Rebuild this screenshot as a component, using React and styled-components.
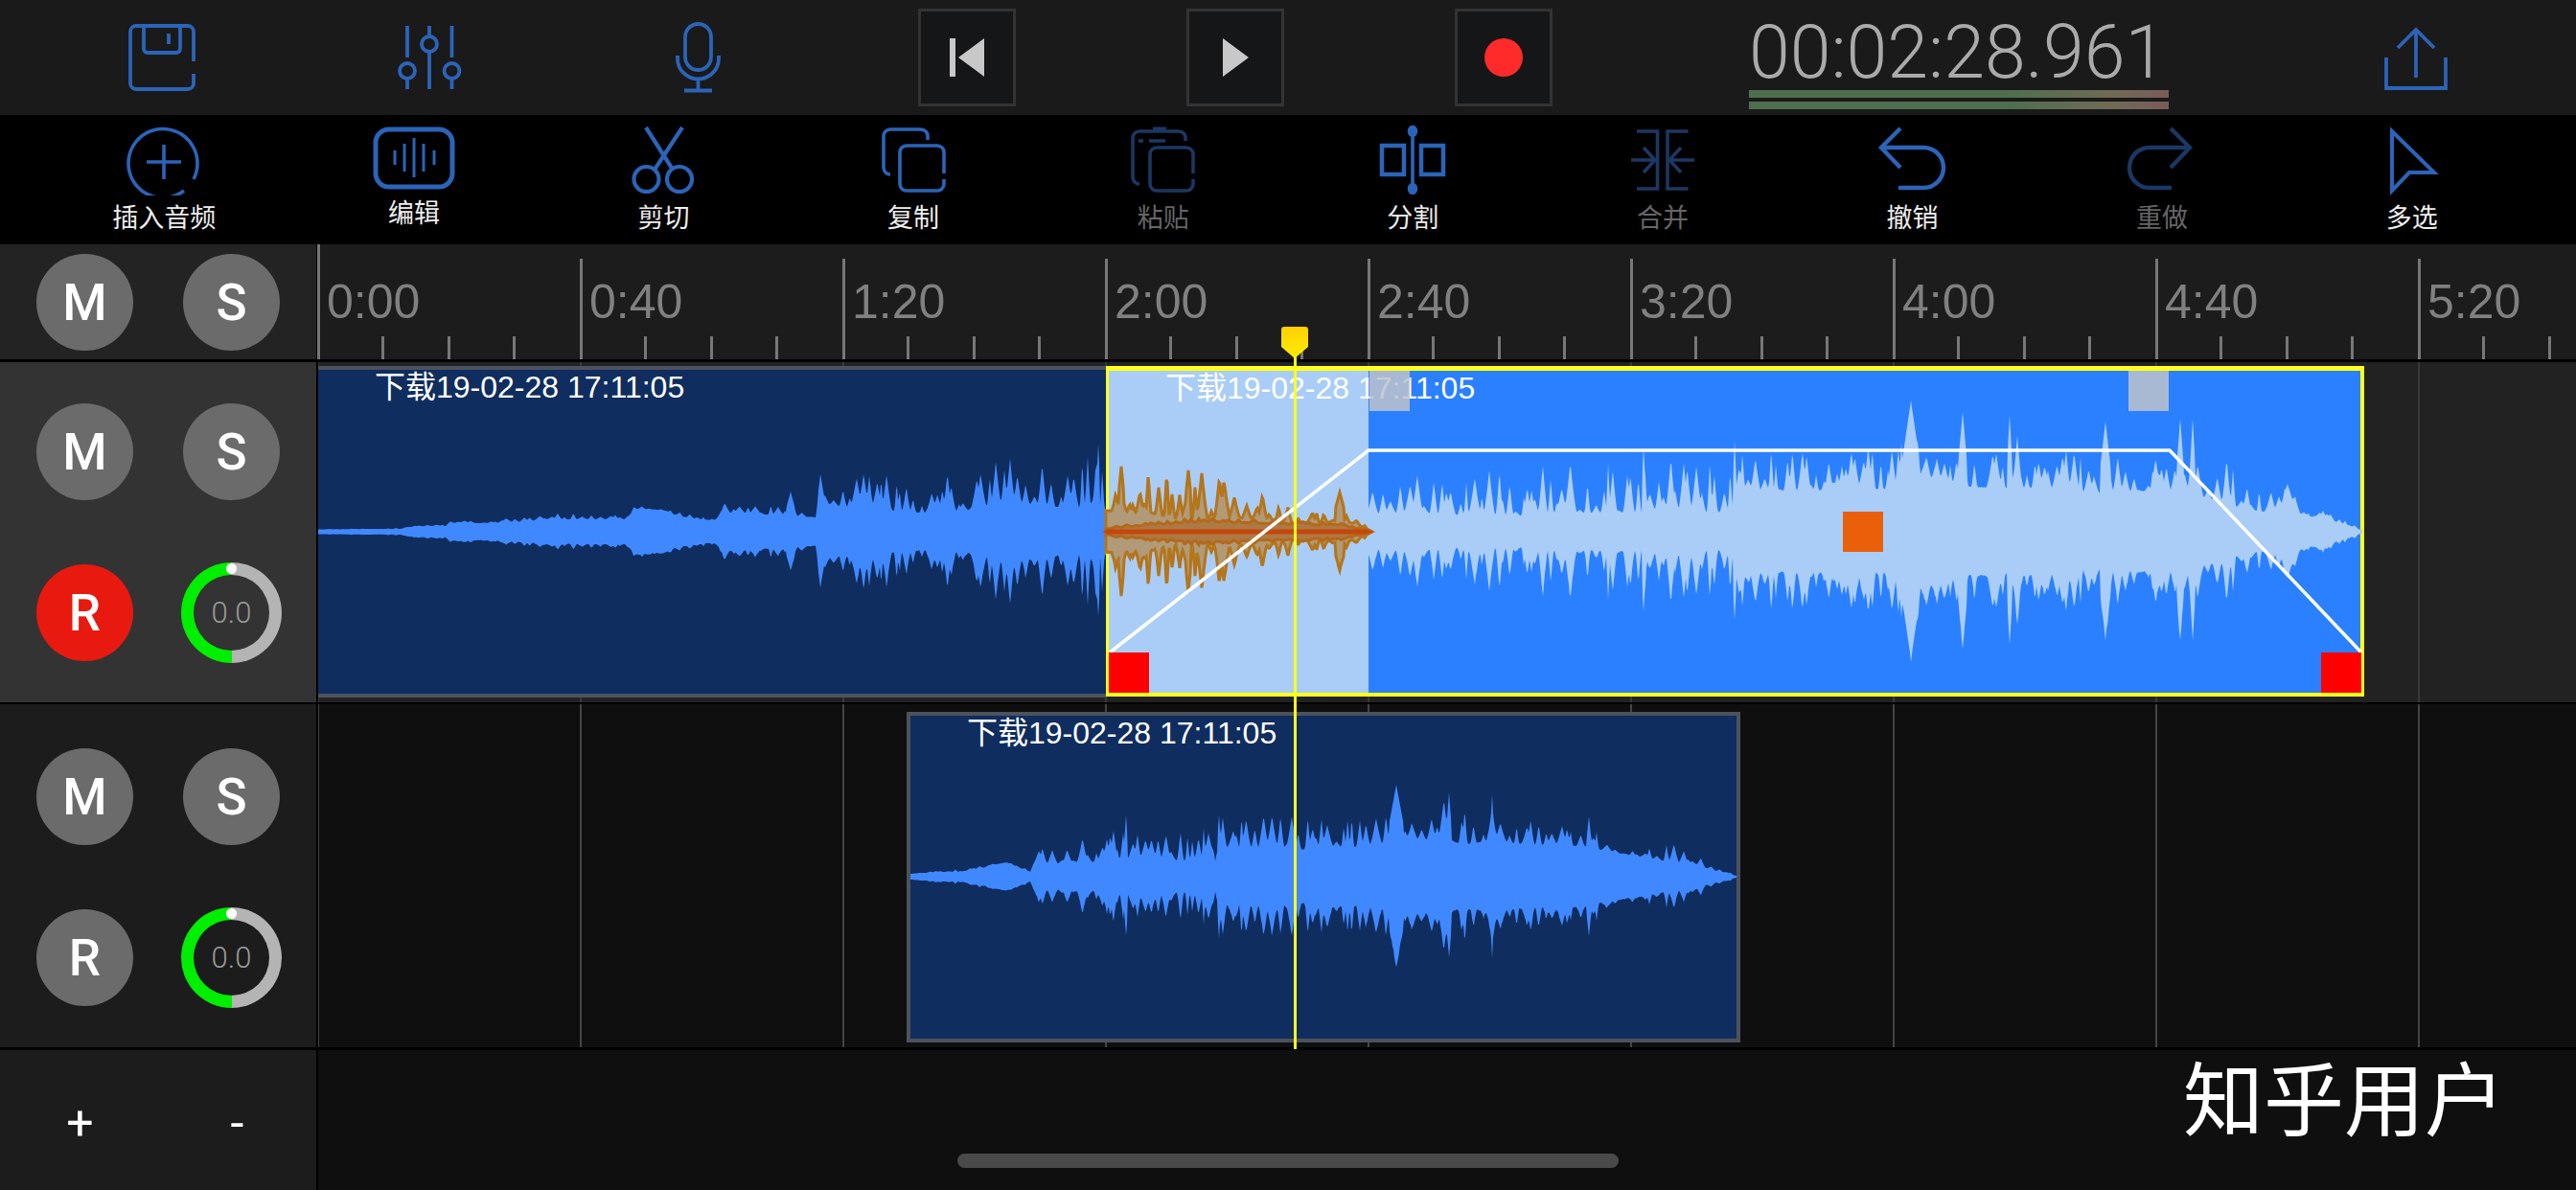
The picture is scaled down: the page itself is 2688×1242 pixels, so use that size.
import React from 'react'
import styled, { createGlobalStyle } from 'styled-components'

const BLUE = '#2b64b8'
const DIM = '#1c3763'
const SANS = '"Liberation Sans", "Noto Sans CJK SC", sans-serif'

// seeded noise so the wave forms stay the same between runs
const makeRng = (seed) => () => {
  seed = (seed * 16807) % 2147483647
  return seed / 2147483647
}

const lerpStops = (stops, x) => {
  for (let i = 1; i < stops.length; i++) {
    if (x <= stops[i][0]) {
      const [x0, b0, t0] = stops[i - 1]
      const [x1, b1, t1] = stops[i]
      const k = (x - x0) / (x1 - x0 || 1)
      return [b0 + (b1 - b0) * k, t0 + (t1 - t0) * k]
    }
  }
  const last = stops[stops.length - 1]
  return [last[1], last[2]]
}

const makeSpikes = (from, to, rng) => {
  const out = []
  for (let x = from; x < to; x += 3 + rng() * 8) {
    out.push({ x, h: Math.pow(rng(), 0.75), w: 2.5 + rng() * 4.5 })
  }
  return out
}

const spikeAt = (spikes, x) => {
  let best = 0
  for (const s of spikes) {
    const d = Math.abs(x - s.x)
    if (d < s.w) best = Math.max(best, s.h * Math.pow(1 - d / s.w, 1.3))
  }
  return best
}

const wavePath = (stops, peaks, cy, seed) => {
  const from = stops[0][0]
  const to = stops[stops.length - 1][0]
  const rng = makeRng(seed)
  const spikes = makeSpikes(from, to, rng)
  const upper = []
  const lower = []
  for (let x = from; x <= to; x += 1) {
    const [body, top] = lerpStops(stops, x)
    let amp = body + (top - body) * spikeAt(spikes, x)
    for (const [px, pa, hw] of peaks) {
      const d = Math.abs(x - px)
      if (d < hw) amp = Math.max(amp, pa * (1 - (d / hw) * 0.45))
    }
    upper.push(`${x.toFixed(1)} ${(cy - amp).toFixed(1)}`)
    lower.unshift(`${x.toFixed(1)} ${(cy + amp * (0.95 + rng() * 0.05)).toFixed(1)}`)
  }
  return `M${upper.join('L')}L${lower.join('L')}Z`
}

const LEAD_IN = [
  [332, 2.5, 3], [418, 3, 4], [425, 5, 6], [465, 6, 8], [470, 9, 11], [520, 9, 13],
  [574, 13, 20], [655, 13, 19], [661, 24, 27], [695, 22, 27], [712, 14, 20], [745, 12, 14],
  [757, 20, 33], [800, 18, 30], [848, 15, 24], [851, 15, 18], [854, 28, 64], [900, 25, 62],
  [960, 20, 58], [1010, 22, 66], [1050, 32, 78], [1100, 26, 84], [1154, 24, 82],
]
const LEAD_IN_PEAKS = [[825, 42, 5], [856, 60, 3], [1146, 92, 2]]

const SELECTED = [
  [1428, 18, 60], [1500, 18, 60], [1600, 16, 74], [1640, 20, 74], [1715, 20, 78],
  [1760, 22, 78], [1805, 20, 82], [1815, 42, 90], [1980, 45, 90], [1985, 58, 95],
  [2005, 60, 100], [2020, 50, 82], [2070, 46, 86], [2125, 46, 86], [2150, 44, 94],
  [2180, 40, 76], [2215, 42, 80], [2260, 42, 78], [2305, 34, 74], [2322, 28, 82],
  [2350, 22, 60], [2380, 20, 42], [2387, 35, 50], [2400, 18, 30], [2440, 10, 18], [2465, 1, 2],
]
const SELECTED_PEAKS = [
  [1994, 137, 9], [2048, 125, 5], [2097, 122, 3], [2105, 100, 4], [2197, 115, 6],
  [2275, 118, 4], [2288, 118, 3], [1715, 88, 2], [1810, 95, 2], [2387, 50, 7],
]

const FADE_OUTER = [
  [1154, 22, 68], [1200, 20, 64], [1238, 12, 66], [1300, 14, 54], [1345, 9, 32],
  [1380, 8, 18], [1396, 12, 24], [1415, 8, 15], [1432, 0, 1],
]
const FADE_OUTER_PEAKS = [[1240, 64, 3], [1398, 41, 5], [1170, 68, 3]]
const FADE_INNER = [[1154, 3, 5], [1240, 10, 14], [1300, 9, 13], [1345, 8, 12], [1400, 6, 9], [1432, 0, 1]]

const SECOND = [
  [950, 3, 3], [980, 5, 7], [1000, 5, 9], [1020, 8, 12], [1050, 15, 17], [1075, 5, 7],
  [1078, 12, 31], [1115, 14, 30], [1126, 16, 42], [1152, 15, 50], [1200, 20, 48], [1240, 16, 48],
  [1265, 20, 56], [1268, 14, 20], [1272, 30, 68], [1350, 28, 66], [1430, 32, 64], [1445, 34, 66],
  [1470, 38, 60], [1505, 38, 84], [1530, 34, 74], [1557, 38, 80], [1590, 34, 74], [1650, 32, 54],
  [1680, 26, 50], [1740, 16, 40], [1770, 12, 26], [1790, 6, 12], [1812, 1, 2],
]
const SECOND_PEAKS = [[1457, 96, 8], [1512, 88, 3], [1557, 86, 2], [1175, 64, 2], [1272, 65, 2], [1658, 63, 3]]

const PATHS = {
  leadIn: wavePath(LEAD_IN, LEAD_IN_PEAKS, 555, 11),
  selected: wavePath(SELECTED, SELECTED_PEAKS, 555, 73),
  fadeOuter: wavePath(FADE_OUTER, FADE_OUTER_PEAKS, 555, 29),
  fadeInner: wavePath(FADE_INNER, [], 555, 41),
  second: wavePath(SECOND, SECOND_PEAKS, 915, 97),
}

const GlobalStyle = createGlobalStyle`
  html, body {
    margin: 0;
    background: #000;
    overflow: hidden;
  }
`

const Screen = styled.div`
  position: relative;
  width: 2688px;
  height: 1242px;
  overflow: hidden;
  display: flex;
  flex-direction: column;
  background: #000;
  font-family: ${SANS};
`

const TopBar = styled.div`
  height: 120px;
  flex: none;
  display: grid;
  grid-template-columns: repeat(6, 280px) 1fr 280px;
  padding: 0 27px 0 29px;
  align-items: center;
  justify-items: center;
  background: #1a1a1a;
`

const Transport = styled.div`
  box-sizing: border-box;
  width: 102px;
  height: 102px;
  display: flex;
  align-items: center;
  justify-content: center;
  background: #151617;
  border: 3px solid #333;
`

const TimerCell = styled.div`
  justify-self: start;
  padding-left: 116px;
  display: flex;
  flex-direction: column;
  gap: 1px;
  padding-top: 15px;
`

const Clock = styled.div`
  font-family: Roboto, sans-serif;
  font-weight: 300;
  font-size: 77px;
  line-height: 76px;
  color: #aaa;
  white-space: nowrap;
`

const Meter = styled.div`
  width: 438px;
  height: 8px;
  margin-bottom: 4px;
  background: linear-gradient(90deg, #4f6e4f 0, #4f6e4f 62%, #6f6b55 85%, #7a5c5a 100%);
`

const Toolbar = styled.div`
  height: 135px;
  flex: none;
  box-sizing: border-box;
  display: grid;
  grid-template-columns: repeat(10, 1fr);
  padding: 9px 41px 0;
  background: #000;
`

const Tool = styled.div`
  display: flex;
  flex-direction: column;
  align-items: center;
`

const ToolIcon = styled.svg`
  display: block;
  height: 75px;
  fill: none;
  stroke: ${({ $off }) => ($off ? DIM : BLUE)};
  stroke-width: 3.6;
`

const ToolLabel = styled.div`
  font-size: 27px;
  line-height: 32px;
  margin-top: ${({ $raised }) => ($raised ? '3px' : '8px')};
  color: ${({ $off }) => ($off ? '#666' : '#eee')};
  white-space: nowrap;
`

const TopIcon = styled.svg`
  display: block;
  fill: none;
  stroke: ${BLUE};
  stroke-width: 3.8;
`

const Row = styled.div`
  flex: none;
  height: ${({ $h }) => $h}px;
  margin-bottom: ${({ $gap }) => $gap || 0}px;
  display: grid;
  grid-template-columns: 330px 1fr;
  column-gap: 2px;
`

const Panel = styled.div`
  box-sizing: border-box;
  display: grid;
  grid-template-columns: 101px 101px;
  grid-auto-rows: 101px;
  column-gap: 52px;
  row-gap: 67px;
  padding: ${({ $top }) => $top}px 0 0 38px;
  background: ${({ $bg }) => $bg};
`

const Round = styled.div`
  width: 101px;
  height: 101px;
  border-radius: 50%;
  display: flex;
  align-items: center;
  justify-content: center;
  background: ${({ $on }) => ($on ? '#e8190f' : '#6b6b6b')};
  color: #fff;
  font-family: Roboto, sans-serif;
  font-weight: 500;
  font-size: 53px;
`

const Knob = styled.div`
  position: relative;
  width: 105px;
  height: 105px;
  margin: -2px;
  border-radius: 50%;
  display: flex;
  align-items: center;
  justify-content: center;
  background: conic-gradient(#b4b4b4 0 50%, #00ee00 50% 100%);
`

const KnobHub = styled.div`
  width: 79px;
  height: 79px;
  border-radius: 50%;
  display: flex;
  align-items: center;
  justify-content: center;
  background: ${({ $bg }) => $bg};
  color: #999;
  font-family: Roboto, sans-serif;
  font-weight: 300;
  font-size: 31px;
`

const KnobDot = styled.div`
  position: absolute;
  top: 1px;
  left: 47px;
  width: 11px;
  height: 11px;
  border-radius: 50%;
  background: #fff;
`

const Ruler = styled.div`
  margin-left: -1px;
  display: flex;
  overflow: hidden;
  background: #1c1c1c;
`

const tick = (x, y, h) => `linear-gradient(#777, #777) ${x}px ${y}px / 3px ${h}px no-repeat`

const RulerCell = styled.div`
  flex: 0 0 274px;
  box-sizing: border-box;
  padding: 32px 0 0 10px;
  font-size: 50px;
  line-height: 56px;
  color: #808080;
  background: ${({ $first }) => ($first ? tick(0, 0, 120) : tick(0, 15, 105))},
    ${tick(67, 96, 24)}, ${tick(136, 96, 24)}, ${tick(204, 96, 24)};
`

const Lane = styled.div`
  position: relative;
  background: linear-gradient(to right, ${({ $line }) => $line} 2px, transparent 2px) -1px 0 / 274px 100%, ${({ $bg }) => $bg};
`

const Clip = styled.div`
  position: absolute;
  box-sizing: border-box;
  left: ${({ $x }) => $x}px;
  top: ${({ $y }) => $y}px;
  width: ${({ $w }) => $w}px;
  height: ${({ $h }) => $h}px;
  border-style: solid;
  border-color: ${({ $selected }) => ($selected ? '#ffff1e' : '#4d525c')};
  border-width: ${({ $edges }) => $edges};
  background: ${({ $selected }) =>
    $selected ? 'linear-gradient(to right, #a9cdf7 271px, #2b80ff 271px)' : '#0f2d5e'};
`

const ClipName = styled.div`
  position: relative;
  padding: 1px 0 0 ${({ $indent }) => $indent}px;
  font-size: 32px;
  line-height: 34px;
  color: #fff;
  white-space: nowrap;
`

const WaveLayer = styled.svg`
  position: absolute;
  inset: 0;
  width: 100%;
  height: 100%;
  overflow: visible;
`

const Handle = styled.div`
  position: absolute;
  left: ${({ $x }) => $x}px;
  top: ${({ $y }) => $y}px;
  width: 42px;
  height: 42px;
  background: ${({ $color }) => $color};
`

const ZoomCell = styled.div`
  color: #fff;
  font-family: Roboto, sans-serif;
  font-size: 50px;
  line-height: 152px;
  text-align: center;
  width: 101px;
  margin-left: ${({ $shift }) => $shift}px;
`

const BottomLane = styled.div`
  position: relative;
  background: #0f0f0f;
`

const Watermark = styled.div`
  position: absolute;
  right: 74px;
  top: -3px;
  font-family: "Noto Sans CJK SC", sans-serif;
  font-size: 84px;
  line-height: 100px;
  color: #fff;
`

const HomeBar = styled.div`
  position: absolute;
  left: 667px;
  top: 108px;
  width: 690px;
  height: 15px;
  border-radius: 8px;
  background: #4a4a4a;
`

const PlayLine = styled.div`
  position: absolute;
  left: 1350px;
  top: 370px;
  width: 3px;
  height: 725px;
  background: #ffff1e;
`

const PlayHead = styled.svg`
  position: absolute;
  left: 1337px;
  top: 341px;
  width: 28px;
  height: 33px;
`

const SaveIcon = () => (
  <TopIcon width="70" height="70" viewBox="0 0 70 70">
    <path d="M68 39V8a6 6 0 0 0-6-6H8a6 6 0 0 0-6 6v54a6 6 0 0 0 6 6h54a6 6 0 0 0 6-6V52" />
    <path d="M16 2v24a4 4 0 0 0 4 4h30a4 4 0 0 0 4-4V2M42 10v11" />
  </TopIcon>
)

const SlidersIcon = () => (
  <TopIcon width="70" height="70" viewBox="0 0 70 70">
    <path d="M11 2v33M11 58v10M34 2v10M34 30v38M57.5 2v33M57.5 58v10" />
    <circle cx="11" cy="49" r="8" />
    <circle cx="34" cy="21" r="8" />
    <circle cx="57.5" cy="49" r="8" />
  </TopIcon>
)

const MicIcon = () => (
  <TopIcon width="60" height="80" viewBox="0 0 60 80">
    <rect x="16" y="5" width="27" height="48" rx="13.5" />
    <path d="M8 38v3a21.5 21.5 0 0 0 43 0v-3M29.5 62v12M15 74.5h29" />
  </TopIcon>
)

const ShareIcon = () => (
  <TopIcon width="72" height="72" viewBox="0 0 72 72">
    <path d="M17 26L36 7l19 19M36 8v49M5 36v32h62V36" />
  </TopIcon>
)

const TOOLS = [
  {
    label: '插入音频',
    w: 80,
    icon: (
      <>
        <path d="M71 58A36 36 0 1 0 61 70" />
        <path d="M40 22v36M22 40h36" />
      </>
    ),
  },
  {
    label: '编辑',
    w: 92,
    raised: true,
    icon: (
      <>
        <rect x="6" y="6" width="80" height="60" rx="14" strokeWidth="5" />
        <path d="M26 28v15M36 21v29M46 15v41M56 21v29M67 28v15" strokeWidth="3" />
      </>
    ),
  },
  {
    label: '剪切',
    w: 75,
    icon: (
      <>
        <circle cx="19.5" cy="58" r="13" strokeWidth="4.2" />
        <circle cx="54" cy="58" r="13" strokeWidth="4.2" />
        <path d="M19 4l28 44M57 4L28 48" strokeWidth="4.2" />
      </>
    ),
  },
  {
    label: '复制',
    w: 75,
    icon: (
      <>
        <path d="M52 17v-4a7 7 0 0 0-7-7H13a7 7 0 0 0-7 7v33a7 7 0 0 0 7 7" />
        <path d="M69 52V30a7 7 0 0 0-7-7H30a7 7 0 0 0-7 7v33a7 7 0 0 0 7 7h32a7 7 0 0 0 7-7v-5" />
      </>
    ),
  },
  {
    label: '粘贴',
    w: 75,
    off: true,
    icon: (
      <>
        <path d="M61 18v-3a7 7 0 0 0-7-7H13a7 7 0 0 0-7 7v41a7 7 0 0 0 7 7" />
        <path d="M27 6h14" strokeWidth="5" />
        <path d="M12 18h5M23 18h17" />
        <path d="M69 52V32a7 7 0 0 0-7-7H31a7 7 0 0 0-7 7v31a7 7 0 0 0 7 7h31a7 7 0 0 0 7-7v-5" />
      </>
    ),
  },
  {
    label: '分割',
    w: 78,
    icon: (
      <>
        <path d="M39 5v66" />
        <ellipse cx="39" cy="8" rx="3.5" ry="4.5" fill={BLUE} />
        <ellipse cx="39" cy="68" rx="3.5" ry="4.5" fill={BLUE} />
        <rect x="7" y="23" width="23" height="30" strokeWidth="4.5" />
        <rect x="48" y="23" width="23" height="30" strokeWidth="4.5" />
      </>
    ),
  },
  {
    label: '合并',
    w: 66,
    off: true,
    icon: (
      <>
        <path d="M6 8h21.5v60H6M59.5 8H38v60h21.5" />
        <path d="M0 38h24M13 25l12 13-12 13M66 38H41M52 25L40 38l12 13" />
      </>
    ),
  },
  {
    label: '撤销',
    w: 75,
    icon: <path d="M25 5L5 25l20 21M5 25h44a21 21 0 0 1 0 42H23" strokeWidth="4.4" />,
  },
  {
    label: '重做',
    w: 75,
    off: true,
    icon: <path d="M46 5l20 20-20 21M66 25H24a21 21 0 0 0 0 42h23" strokeWidth="4.4" />,
  },
  {
    label: '多选',
    w: 60,
    icon: <path d="M9 8l44 43H27L9 70z" strokeWidth="4" />,
  },
]

const MARKS = ['0:00', '0:40', '1:20', '2:00', '2:40', '3:20', '4:00', '4:40', '5:20']
const CLIP_NAME = '下载19-02-28 17:11:05'

const VolumeKnob = ({ bg }) => (
  <Knob>
    <KnobHub $bg={bg}>0.0</KnobHub>
    <KnobDot />
  </Knob>
)

const TrackControls = ({ top, bg, armed }) => (
  <Panel $top={top} $bg={bg}>
    <Round>M</Round>
    <Round>S</Round>
    <Round $on={armed}>R</Round>
    <VolumeKnob bg={bg} />
  </Panel>
)

const App = () => (
  <Screen>
    <GlobalStyle />
    <TopBar>
      <SaveIcon />
      <SlidersIcon />
      <MicIcon />
      <Transport>
        <svg width="40" height="42" viewBox="0 0 40 42">
          <rect x="2" y="1" width="6" height="40" fill="#c8c8c8" />
          <path d="M38 1v40L11 21z" fill="#c8c8c8" />
        </svg>
      </Transport>
      <Transport>
        <svg width="28" height="42" viewBox="0 0 28 42">
          <path d="M1 1v40l27-20z" fill="#c8c8c8" />
        </svg>
      </Transport>
      <Transport>
        <svg width="40" height="40" viewBox="0 0 40 40">
          <circle cx="20" cy="20" r="20" fill="#ff2a2a" />
        </svg>
      </Transport>
      <TimerCell>
        <Clock>00:02:28.961</Clock>
        <div>
          <Meter />
          <Meter />
        </div>
      </TimerCell>
      <ShareIcon />
    </TopBar>

    <Toolbar>
      {TOOLS.map((tool) => (
        <Tool key={tool.label}>
          <ToolIcon $off={tool.off} width={tool.w} viewBox={`0 0 ${tool.w} 75`}>
            {tool.icon}
          </ToolIcon>
          <ToolLabel $off={tool.off} $raised={tool.raised}>
            {tool.label}
          </ToolLabel>
        </Tool>
      ))}
    </Toolbar>

    <Row $h={120} $gap={3}>
      <Panel $top={10} $bg="#232323">
        <Round>M</Round>
        <Round>S</Round>
      </Panel>
      <Ruler>
        {MARKS.map((mark, i) => (
          <RulerCell key={mark} $first={i === 0}>
            {mark}
          </RulerCell>
        ))}
      </Ruler>
    </Row>

    <Row $h={355} $gap={2}>
      <TrackControls top={43} bg="#333" armed />
      <Lane $bg="#222" $line="#3a3a3a">
        <Clip $x={0} $y={4} $w={822} $h={346} $edges="4px 0">
          <WaveLayer viewBox="332 386 822 338" preserveAspectRatio="none">
            <path d={PATHS.leadIn} fill="#4088ff" />
          </WaveLayer>
          <ClipName $indent={59}>{CLIP_NAME}</ClipName>
        </Clip>
        <Clip $selected $x={822} $y={4} $w={1313} $h={345} $edges="5px 4px 4px 3px">
          <WaveLayer viewBox="1157 387 1306 336" preserveAspectRatio="none">
            <path d={PATHS.selected} fill="#a9cdf7" />
            <path d={PATHS.fadeOuter} fill="#b09a78" stroke="#b5751a" strokeWidth="3" />
            <path d={PATHS.fadeInner} fill="#ad7a45" stroke="#b5691a" strokeWidth="3" />
            <path d="M1150 555l6-2.500h270l7 2.500-7 2.500h-270z" fill="#c4470b" />
            <path d="M1158 681L1428 470H2264L2464 681" fill="none" stroke="#fff" strokeWidth="3.5" />
          </WaveLayer>
          <ClipName $indent={59}>{CLIP_NAME}</ClipName>
          <Handle $x={272} $y={0} $color="rgba(190, 195, 205, 0.85)" />
          <Handle $x={1064} $y={0} $color="rgba(190, 195, 205, 0.85)" />
          <Handle $x={766} $y={147} $color="#ea5f0a" />
          <Handle $x={0} $y={294} $color="#ff0000" />
          <Handle $x={1265} $y={294} $color="#ff0000" />
        </Clip>
      </Lane>
    </Row>

    <Row $h={358} $gap={3}>
      <TrackControls top={46} bg="#1c1c1c" />
      <Lane $bg="#0f0f0f" $line="#444">
        <Clip $x={614} $y={8} $w={870} $h={345} $edges="4px">
          <WaveLayer viewBox="950 747 862 337" preserveAspectRatio="none">
            <path d={PATHS.second} fill="#4088ff" />
          </WaveLayer>
          <ClipName $indent={59}>{CLIP_NAME}</ClipName>
        </Clip>
      </Lane>
    </Row>

    <Row $h={146}>
      <Panel $top={0} $bg="#1c1c1c">
        <ZoomCell $shift={-5}>+</ZoomCell>
        <ZoomCell $shift={6}>-</ZoomCell>
      </Panel>
      <BottomLane>
        <Watermark>知乎用户</Watermark>
        <HomeBar />
      </BottomLane>
    </Row>

    <PlayLine />
    <PlayHead viewBox="0 0 28 33">
      <defs>
        <linearGradient id="head" x1="0" y1="0" x2="0" y2="1">
          <stop offset="0" stopColor="#ffd000" />
          <stop offset="1" stopColor="#ffee00" />
        </linearGradient>
      </defs>
      <path d="M3 0h22a3 3 0 0 1 3 3v18L14 33 0 21V3a3 3 0 0 1 3-3z" fill="url(#head)" />
    </PlayHead>
  </Screen>
)

export default App
